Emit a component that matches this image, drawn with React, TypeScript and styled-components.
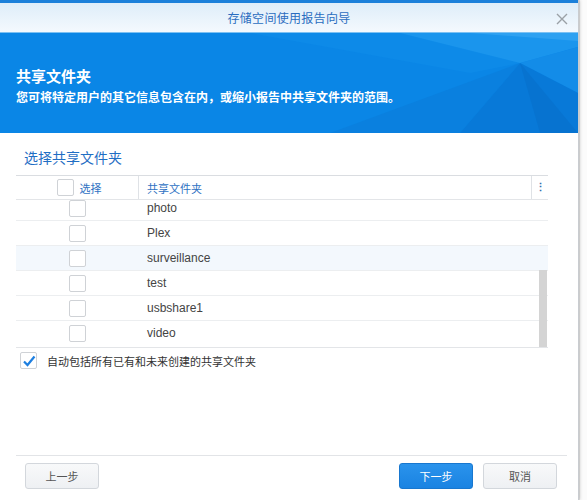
import React from "react";
import styled, { createGlobalStyle } from "styled-components";

const FONT = `"Liberation Sans", "Noto Sans CJK SC", sans-serif`;

const Global = createGlobalStyle`
  html, body { margin: 0; padding: 0; background: #ffffff; }
  body { font-family: ${FONT}; }
`;

const Page = styled.div`
  display: flex;
  width: 587px;
  height: 500px;
  overflow: hidden;
`;

const Dialog = styled.div`
  width: 578px;
  height: 500px;
  display: flex;
  flex-direction: column;
  background: #fff;
  border-right: 1px solid #c9ccd0;
  box-shadow: 1px 0 3px rgba(0, 0, 0, 0.18);
  position: relative;
  z-index: 1;
`;

const Backdrop = styled.div`
  flex: 1;
  background: #fbfbfb;
  border-left: 1px solid #e6e6e6;
`;

const TitleBar = styled.div`
  height: 29px;
  border-top: 3px solid #1b80da;
  background: linear-gradient(#deedf9, #f4f9fe);
  display: flex;
  align-items: center;
  justify-content: center;
  position: relative;
  border-bottom: 1px solid #7cc1f3;
`;

const Title = styled.span`
  font-size: 12px;
  color: #2a6dbf;
  letter-spacing: 0.3px;
`;

const Close = styled.span`
  position: absolute;
  right: 10px;
  top: 8px;
  width: 12px;
  height: 12px;
`;

const Banner = styled.div`
  height: 100px;
  background: #0a86e6;
  position: relative;
  overflow: hidden;
  display: flex;
  flex-direction: column;
  justify-content: center;
  padding-left: 16px;
  color: #fff;
`;

const Facets = styled.svg`
  position: absolute;
  left: 0;
  top: 0;
`;

const BannerTitle = styled.div`
  font-size: 15px;
  font-weight: bold;
  position: relative;
  margin-top: 4px;
`;

const BannerText = styled.div`
  font-size: 12px;
  font-weight: bold;
  position: relative;
  margin-top: 2px;
`;

const Content = styled.div`
  flex: 1;
  padding: 16px 30px 0 16px;
  display: flex;
  flex-direction: column;
`;

const SectionTitle = styled.div`
  font-size: 14px;
  color: #1f6ec4;
  padding-left: 8px;
  height: 26px;
  line-height: 18px;
`;

const Table = styled.div`
  width: 532px;
  border-top: 1px solid #dadde1;
`;

const HeadRow = styled.div`
  display: grid;
  grid-template-columns: 123px 1fr 16px;
  height: 23px;
  border-bottom: 1px solid #e3e5e8;
`;

const HeadCell = styled.div<{ $center?: boolean; $divider?: boolean }>`
  display: flex;
  align-items: center;
  justify-content: ${(p) => (p.$center ? "center" : "flex-start")};
  gap: 6px;
  padding-left: ${(p) => (p.$center ? 4 : 8)}px;
  font-size: 11px;
  color: #2f72c3;
  border-right: ${(p) => (p.$divider ? "1px solid #dfe2e6" : "none")};
`;

const Menu = styled.div`
  display: flex;
  align-items: center;
  justify-content: center;
  font-size: 11px;
  font-weight: bold;
  color: #3a6fb0;
`;

const Body = styled.div`
  height: 147px;
  overflow: hidden;
  position: relative;
  border-bottom: 1px solid #e3e5e8;
`;

const List = styled.div`
  margin-top: -4px;
`;

const Row = styled.div<{ $active?: boolean }>`
  display: grid;
  grid-template-columns: 123px 1fr;
  height: 24px;
  border-bottom: 1px solid #eceef0;
  background: ${(p) => (p.$active ? "#f3f8fd" : "#fff")};
  &:last-child { border-bottom: none; }
`;

const Cell = styled.div<{ $center?: boolean }>`
  display: flex;
  align-items: center;
  justify-content: ${(p) => (p.$center ? "center" : "flex-start")};
  padding-left: ${(p) => (p.$center ? 0 : 8)}px;
  font-size: 12px;
  color: #444;
`;

const Box = styled.span`
  width: 15px;
  height: 15px;
  border: 1px solid #cfd2d6;
  border-radius: 2px;
  background: #fff;
  display: inline-flex;
  align-items: center;
  justify-content: center;
  flex: none;
`;

const Scroll = styled.div`
  position: absolute;
  right: 1px;
  top: 70px;
  bottom: 0;
  width: 8px;
  background: #d4d4d4;
`;

const CheckLine = styled.label`
  display: flex;
  align-items: center;
  gap: 10px;
  margin-top: 4px;
  padding-left: 4px;
  font-size: 11px;
  color: #333;
`;

const Footer = styled.div`
  margin: 0 11px 0 16px;
  border-top: 1px solid #e2e4e7;
  padding: 7px 10px 11px 9px;
  display: flex;
  gap: 10px;
`;

const Button = styled.button<{ $primary?: boolean }>`
  width: 74px;
  height: 26px;
  border-radius: 3px;
  font-family: ${FONT};
  font-size: 11px;
  cursor: pointer;
  color: ${(p) => (p.$primary ? "#fff" : "#555")};
  border: 1px solid ${(p) => (p.$primary ? "#1877cf" : "#d3d7dc")};
  background: ${(p) =>
    p.$primary ? "linear-gradient(#2a93ec, #1a83e2)" : "linear-gradient(#f8f9fa, #eef0f3)"};
`;

const Spacer = styled.div`
  flex: 1;
`;

const folders = ["photo", "Plex", "surveillance", "test", "usbshare1", "video"];

export default function App() {
  return (
    <Page>
      <Global />
      <Dialog>
        <TitleBar>
          <Title>存储空间使用报告向导</Title>
          <Close>
            <svg width="12" height="12" viewBox="0 0 12 12">
              <path d="M1 1 L11 11 M11 1 L1 11" stroke="#9aa0a6" strokeWidth="1.4" />
            </svg>
          </Close>
        </TitleBar>
        <Banner>
          <Facets width="578" height="100" viewBox="0 0 578 100">
            <polygon points="250,0 578,0 560,22 470,40" fill="#0d8ae8" />
            <polygon points="400,0 578,0 578,14 520,30" fill="#1a95ed" />
            <polygon points="470,0 578,0 578,8" fill="#2ea1f1" />
            <polygon points="520,30 578,14 578,60" fill="#138ce8" />
            <polygon points="330,100 460,100 520,30" fill="#0a80df" />
            <polygon points="460,100 578,100 578,60 520,30" fill="#0879d8" />
            <polygon points="520,30 540,100 578,100" fill="#0773d0" />
          </Facets>
          <BannerTitle>共享文件夹</BannerTitle>
          <BannerText>您可将特定用户的其它信息包含在内，或缩小报告中共享文件夹的范围。</BannerText>
        </Banner>
        <Content>
          <SectionTitle>选择共享文件夹</SectionTitle>
          <Table>
            <HeadRow>
              <HeadCell $center $divider>
                <Box />
                选择
              </HeadCell>
              <HeadCell $divider>共享文件夹</HeadCell>
              <Menu>⋮</Menu>
            </HeadRow>
            <Body>
              <List>
                {folders.map((f) => (
                  <Row key={f} $active={f === "surveillance"}>
                    <Cell $center>
                      <Box />
                    </Cell>
                    <Cell>{f}</Cell>
                  </Row>
                ))}
              </List>
              <Scroll />
            </Body>
          </Table>
          <CheckLine>
            <Box>
              <svg width="14" height="12" viewBox="0 0 14 12">
                <path d="M2 6.5 L5.5 10 L12.5 1.5" stroke="#1e7fe0" strokeWidth="2.2" fill="none" />
              </svg>
            </Box>
            自动包括所有已有和未来创建的共享文件夹
          </CheckLine>
          <Spacer />
        </Content>
        <Footer>
          <Button>上一步</Button>
          <Spacer />
          <Button $primary>下一步</Button>
          <Button>取消</Button>
        </Footer>
      </Dialog>
      <Backdrop />
    </Page>
  );
}
